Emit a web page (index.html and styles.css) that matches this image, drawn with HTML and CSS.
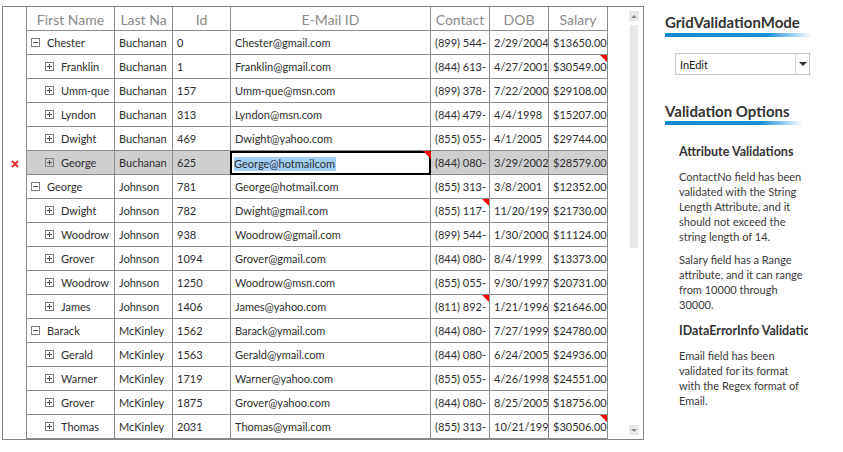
FILE: index.html
```
<!DOCTYPE html>
<html>
<head>
<meta charset="utf-8">
<link rel="stylesheet" href="styles.css">
</head>
<body>
<div class="page">
  <div class="grid">
    <div class="table">
      <div class="row head">
        <div class="rh"></div>
        <div class="cell">First Name</div>
        <div class="cell">Last Na</div>
        <div class="cell">Id</div>
        <div class="cell">E-Mail ID</div>
        <div class="cell">Contact</div>
        <div class="cell">DOB</div>
        <div class="cell">Salary</div>
      </div>

      <div class="row"><div class="rh"></div>
        <div class="cell name grp"><svg class="exp" width="9" height="9" viewBox="0 0 9 9"><rect x=".5" y=".5" width="8" height="8" fill="#fff" stroke="#7d7d7d"/><path d="M2 4.5h5" stroke="#555"/></svg>Chester</div>
        <div class="cell">Buchanan</div><div class="cell">0</div><div class="cell">Chester@gmail.com</div><div class="cell">(899) 544-</div><div class="cell">2/29/2004</div><div class="cell">$13650.00</div></div>

      <div class="row"><div class="rh"></div>
        <div class="cell name"><svg class="exp" width="9" height="9" viewBox="0 0 9 9"><rect x=".5" y=".5" width="8" height="8" fill="#fff" stroke="#7d7d7d"/><path d="M2 4.5h5M4.5 2v5" stroke="#555"/></svg>Franklin</div>
        <div class="cell">Buchanan</div><div class="cell">1</div><div class="cell">Franklin@gmail.com</div><div class="cell">(844) 613-</div><div class="cell">4/27/2001</div><div class="cell">$30549.00<span class="err"></span></div></div>

      <div class="row"><div class="rh"></div>
        <div class="cell name"><svg class="exp" width="9" height="9" viewBox="0 0 9 9"><rect x=".5" y=".5" width="8" height="8" fill="#fff" stroke="#7d7d7d"/><path d="M2 4.5h5M4.5 2v5" stroke="#555"/></svg>Umm-que</div>
        <div class="cell">Buchanan</div><div class="cell">157</div><div class="cell">Umm-que@msn.com</div><div class="cell">(899) 378-</div><div class="cell">7/22/2000</div><div class="cell">$29108.00</div></div>

      <div class="row"><div class="rh"></div>
        <div class="cell name"><svg class="exp" width="9" height="9" viewBox="0 0 9 9"><rect x=".5" y=".5" width="8" height="8" fill="#fff" stroke="#7d7d7d"/><path d="M2 4.5h5M4.5 2v5" stroke="#555"/></svg>Lyndon</div>
        <div class="cell">Buchanan</div><div class="cell">313</div><div class="cell">Lyndon@msn.com</div><div class="cell">(844) 479-</div><div class="cell">4/4/1998</div><div class="cell">$15207.00</div></div>

      <div class="row"><div class="rh"></div>
        <div class="cell name"><svg class="exp" width="9" height="9" viewBox="0 0 9 9"><rect x=".5" y=".5" width="8" height="8" fill="#fff" stroke="#7d7d7d"/><path d="M2 4.5h5M4.5 2v5" stroke="#555"/></svg>Dwight</div>
        <div class="cell">Buchanan</div><div class="cell">469</div><div class="cell">Dwight@yahoo.com</div><div class="cell">(855) 055-</div><div class="cell">4/1/2005</div><div class="cell">$29744.00</div></div>

      <div class="row sel"><div class="rh"><svg class="xmark" width="8" height="8" viewBox="0 0 8 8"><path d="M1 1l6 6M7 1l-6 6" stroke="#e8302c" stroke-width="2"/></svg></div>
        <div class="cell name"><svg class="exp" width="9" height="9" viewBox="0 0 9 9"><rect x=".5" y=".5" width="8" height="8" fill="#cfcfcf" stroke="#7d7d7d"/><path d="M2 4.5h5M4.5 2v5" stroke="#555"/></svg>George</div>
        <div class="cell">Buchanan</div><div class="cell before-edit">625</div><div class="cell edit"><span class="hl">George@hotmailcom</span><span class="err edit-err"></span></div><div class="cell">(844) 080-</div><div class="cell">3/29/2002</div><div class="cell">$28579.00</div></div>

      <div class="row"><div class="rh"></div>
        <div class="cell name grp"><svg class="exp" width="9" height="9" viewBox="0 0 9 9"><rect x=".5" y=".5" width="8" height="8" fill="#fff" stroke="#7d7d7d"/><path d="M2 4.5h5" stroke="#555"/></svg>George</div>
        <div class="cell">Johnson</div><div class="cell">781</div><div class="cell">George@hotmail.com</div><div class="cell">(855) 313-</div><div class="cell">3/8/2001</div><div class="cell">$12352.00</div></div>

      <div class="row"><div class="rh"></div>
        <div class="cell name"><svg class="exp" width="9" height="9" viewBox="0 0 9 9"><rect x=".5" y=".5" width="8" height="8" fill="#fff" stroke="#7d7d7d"/><path d="M2 4.5h5M4.5 2v5" stroke="#555"/></svg>Dwight</div>
        <div class="cell">Johnson</div><div class="cell">782</div><div class="cell">Dwight@gmail.com</div><div class="cell">(855) 117-<span class="err"></span></div><div class="cell">11/20/199</div><div class="cell">$21730.00</div></div>

      <div class="row"><div class="rh"></div>
        <div class="cell name"><svg class="exp" width="9" height="9" viewBox="0 0 9 9"><rect x=".5" y=".5" width="8" height="8" fill="#fff" stroke="#7d7d7d"/><path d="M2 4.5h5M4.5 2v5" stroke="#555"/></svg>Woodrow</div>
        <div class="cell">Johnson</div><div class="cell">938</div><div class="cell">Woodrow@gmail.com</div><div class="cell">(899) 544-</div><div class="cell">1/30/2000</div><div class="cell">$11124.00</div></div>

      <div class="row"><div class="rh"></div>
        <div class="cell name"><svg class="exp" width="9" height="9" viewBox="0 0 9 9"><rect x=".5" y=".5" width="8" height="8" fill="#fff" stroke="#7d7d7d"/><path d="M2 4.5h5M4.5 2v5" stroke="#555"/></svg>Grover</div>
        <div class="cell">Johnson</div><div class="cell">1094</div><div class="cell">Grover@gmail.com</div><div class="cell">(844) 080-</div><div class="cell">8/4/1999</div><div class="cell">$13373.00</div></div>

      <div class="row"><div class="rh"></div>
        <div class="cell name"><svg class="exp" width="9" height="9" viewBox="0 0 9 9"><rect x=".5" y=".5" width="8" height="8" fill="#fff" stroke="#7d7d7d"/><path d="M2 4.5h5M4.5 2v5" stroke="#555"/></svg>Woodrow</div>
        <div class="cell">Johnson</div><div class="cell">1250</div><div class="cell">Woodrow@msn.com</div><div class="cell">(855) 055-</div><div class="cell">9/30/1997</div><div class="cell">$20731.00</div></div>

      <div class="row"><div class="rh"></div>
        <div class="cell name"><svg class="exp" width="9" height="9" viewBox="0 0 9 9"><rect x=".5" y=".5" width="8" height="8" fill="#fff" stroke="#7d7d7d"/><path d="M2 4.5h5M4.5 2v5" stroke="#555"/></svg>James</div>
        <div class="cell">Johnson</div><div class="cell">1406</div><div class="cell">James@yahoo.com</div><div class="cell">(811) 892-<span class="err"></span></div><div class="cell">1/21/1996</div><div class="cell">$21646.00</div></div>

      <div class="row"><div class="rh"></div>
        <div class="cell name grp"><svg class="exp" width="9" height="9" viewBox="0 0 9 9"><rect x=".5" y=".5" width="8" height="8" fill="#fff" stroke="#7d7d7d"/><path d="M2 4.5h5" stroke="#555"/></svg>Barack</div>
        <div class="cell">McKinley</div><div class="cell">1562</div><div class="cell">Barack@ymail.com</div><div class="cell">(844) 080-</div><div class="cell">7/27/1999</div><div class="cell">$24780.00</div></div>

      <div class="row"><div class="rh"></div>
        <div class="cell name"><svg class="exp" width="9" height="9" viewBox="0 0 9 9"><rect x=".5" y=".5" width="8" height="8" fill="#fff" stroke="#7d7d7d"/><path d="M2 4.5h5M4.5 2v5" stroke="#555"/></svg>Gerald</div>
        <div class="cell">McKinley</div><div class="cell">1563</div><div class="cell">Gerald@ymail.com</div><div class="cell">(844) 080-</div><div class="cell">6/24/2005</div><div class="cell">$24936.00</div></div>

      <div class="row"><div class="rh"></div>
        <div class="cell name"><svg class="exp" width="9" height="9" viewBox="0 0 9 9"><rect x=".5" y=".5" width="8" height="8" fill="#fff" stroke="#7d7d7d"/><path d="M2 4.5h5M4.5 2v5" stroke="#555"/></svg>Warner</div>
        <div class="cell">McKinley</div><div class="cell">1719</div><div class="cell">Warner@yahoo.com</div><div class="cell">(855) 055-</div><div class="cell">4/26/1998</div><div class="cell">$24551.00</div></div>

      <div class="row"><div class="rh"></div>
        <div class="cell name"><svg class="exp" width="9" height="9" viewBox="0 0 9 9"><rect x=".5" y=".5" width="8" height="8" fill="#fff" stroke="#7d7d7d"/><path d="M2 4.5h5M4.5 2v5" stroke="#555"/></svg>Grover</div>
        <div class="cell">McKinley</div><div class="cell">1875</div><div class="cell">Grover@yahoo.com</div><div class="cell">(844) 080-</div><div class="cell">8/25/2005</div><div class="cell">$18756.00</div></div>

      <div class="row"><div class="rh"></div>
        <div class="cell name"><svg class="exp" width="9" height="9" viewBox="0 0 9 9"><rect x=".5" y=".5" width="8" height="8" fill="#fff" stroke="#7d7d7d"/><path d="M2 4.5h5M4.5 2v5" stroke="#555"/></svg>Thomas</div>
        <div class="cell">McKinley</div><div class="cell">2031</div><div class="cell">Thomas@ymail.com</div><div class="cell">(855) 313-</div><div class="cell">10/21/199</div><div class="cell">$30506.00<span class="err"></span></div></div>
    </div>
    <div class="scroll">
      <div class="sbtn"><span class="up"></span></div>
      <div class="thumb"></div>
      <div class="sbtn down-btn"><span class="down"></span></div>
    </div>
  </div>

  <div class="panel">
    <div class="title t1">GridValidationMode</div>
    <div class="bar b1"></div>
    <div class="combo"><span class="combo-text">InEdit</span><span class="combo-arrow"><span class="down dark"></span></span></div>
    <div class="title t2">Validation Options</div>
    <div class="bar b2"></div>
    <div class="info">
      <div class="sub s1">Attribute Validations</div>
      <p class="para">ContactNo field has been validated with the String Length Attribute, and it should not exceed the string length of 14.</p>
      <p class="para p2">Salary field has a Range attribute, and it can range from 10000 through 30000.</p>
      <div class="sub s2">IDataErrorInfo Validatic</div>
      <p class="para">Email field has been validated for its format with the Regex format of Email.</p>
    </div>
  </div>
</div>
</body>
</html>
```
FILE: styles.css
```
* { box-sizing: border-box; }
body {
  margin: 0;
  background: #fff;
  color: #333;
  font-family: Lato, "Segoe UI", "Noto Sans", sans-serif;
}
.page {
  display: flex;
  padding: 6px 0 0 2px;
}
.grid {
  width: 642px;
  height: 434px;
  border: 1px solid #828282;
  display: flex;
  flex: none;
}
.table {
  width: 605px;
  flex: none;
}
.row {
  display: grid;
  grid-template-columns: 24px 88px 58px 58px 200px 59px 59px 59px;
  height: 24px;
}
.rh {
  border-right: 1px solid #8c8c8c;
  display: flex;
  align-items: center;
  justify-content: center;
}
.cell {
  position: relative;
  border-right: 1px solid #8c8c8c;
  border-bottom: 1px solid #8c8c8c;
  font-size: 11px;
  line-height: 23px;
  padding-left: 4px;
  white-space: nowrap;
  overflow: hidden;
  color: #2e2e2e;
}
.head .cell {
  font-size: 14px;
  color: #8a8a8a;
  text-align: center;
  padding: 2px 0 0 0;
  line-height: 21px;
}
.name {
  display: flex;
  align-items: center;
  padding-left: 18px;
}
.name.grp { padding-left: 4px; }
.exp {
  flex: none;
  margin-right: 7px;
}
.sel .cell { background: #cfcfcf; }
.xmark { margin: 1px 0 0 1px; }
.before-edit { border-right-color: #000; }
.sel .edit {
  background: #fff;
  border: 2px solid #000;
  border-left-width: 1px;
  overflow: visible;
  padding-left: 2px;
  line-height: 20px;
}
.hl {
  display: inline-block;
  background: #a6cff8;
  line-height: 14px;
  vertical-align: middle;
  padding-right: 1px;
}
.err {
  position: absolute;
  top: 0;
  right: 0;
  width: 0;
  height: 0;
  border-top: 7px solid #ff0000;
  border-left: 7px solid transparent;
}
.edit-err {
  top: -2px;
  right: -2px;
  border-top-width: 8px;
  border-left-width: 8px;
}
.scroll {
  flex: 1;
  display: flex;
  flex-direction: column;
  align-items: flex-end;
  padding: 4px 4px 4px 0;
}
.sbtn {
  width: 10px;
  height: 10px;
  background: #e8e8e8;
  display: flex;
  align-items: center;
  justify-content: center;
}
.down-btn { margin-top: auto; }
.thumb {
  width: 8px;
  height: 223px;
  margin: 4px 1px 0 0;
  background: #e8e8e8;
}
.up {
  width: 0;
  height: 0;
  border-left: 3px solid transparent;
  border-right: 3px solid transparent;
  border-bottom: 3px solid #8a8a8a;
}
.down {
  width: 0;
  height: 0;
  border-left: 3px solid transparent;
  border-right: 3px solid transparent;
  border-top: 3px solid #8a8a8a;
}
.down.dark {
  border-left-width: 4px;
  border-right-width: 4px;
  border-top: 4px solid #333;
}
.panel {
  width: 199px;
  padding-left: 21px;
}
.title {
  font-weight: 700;
  font-size: 15px;
  line-height: 18px;
  color: #333;
  white-space: nowrap;
}
.t1 { margin-top: 7px; }
.t2 { margin-top: 27px; }
.bar {
  height: 4px;
  background: linear-gradient(to right, #1389d4 0%, #1b90d8 70%, rgba(40, 150, 220, 0) 100%);
}
.b1 { width: 147px; margin-top: 2px; }
.b2 { width: 138px; margin-top: 1px; }
.combo {
  margin: 16px 0 0 10px;
  width: 135px;
  height: 22px;
  border: 1px solid #c6c6c6;
  display: flex;
  align-items: center;
  font-size: 11px;
  color: #222;
}
.combo-text {
  flex: 1;
  padding-left: 4px;
}
.combo-arrow {
  width: 14px;
  height: 20px;
  border-left: 1px solid #d4d4d4;
  display: flex;
  align-items: center;
  justify-content: center;
}
.info {
  width: 143px;
  padding-left: 14px;
  overflow: hidden;
}
.sub {
  font-weight: 700;
  font-size: 12.5px;
  line-height: 16px;
  white-space: nowrap;
  color: #333;
}
.s1 { margin-top: 19px; }
.s2 { margin-top: 11px; }
.para {
  margin: 9px 0 0 0;
  font-size: 11px;
  line-height: 15px;
  color: #3a3a3a;
  width: 128px;
}
.p2 { margin-top: 8px; }
```
